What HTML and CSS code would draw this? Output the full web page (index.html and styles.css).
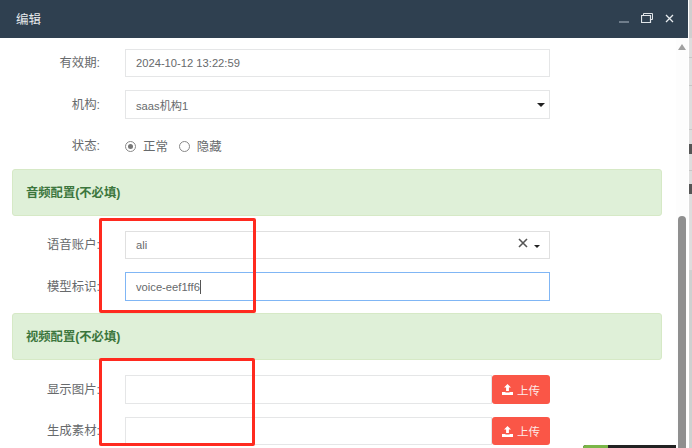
FILE: index.html
```html
<!DOCTYPE html>
<html lang="zh">
<head>
<meta charset="utf-8">
<title>编辑</title>
<link rel="stylesheet" href="styles.css">
</head>
<body>
<div class="backdrop">
  <i class="line l1"></i><i class="line l2"></i><i class="line l3"></i><i class="line l4"></i>
  <i class="tick t1"></i><i class="tick t2"></i>
</div>
<section class="modal">
  <header class="titlebar">
    <h1 class="title">编辑</h1>
    <div class="win-actions">
      <svg class="win-icon" width="10" height="10" viewBox="0 0 10 10"><path d="M0 9h10" stroke="#8b98a5" stroke-width="1.4"/></svg>
      <svg class="win-icon" width="12" height="10" viewBox="0 0 12 10" fill="none" stroke="#dfe4e8"><path d="M.5 2.5h9v7h-9z" stroke-width="1.2"/><path d="M2.5 2V.5h9v6H10" stroke-width="1"/></svg>
      <svg class="win-icon" width="9" height="9" viewBox="0 0 9 9"><path d="M1 1l7 7M8 1L1 8" stroke="#e8ecef" stroke-width="1.3"/></svg>
    </div>
  </header>
  <div class="body">
    <form class="form">
      <div class="row"><label class="lbl">有效期:</label><div class="field">2024-10-12 13:22:59</div></div>
      <div class="row row-sel"><label class="lbl">机构:</label><div class="field">saas机构1<span class="caret caret-a"></span></div></div>
      <div class="row row-radio"><label class="lbl">状态:</label>
        <div class="radios">
          <span class="radio on"></span><span class="rtext">正常</span>
          <span class="radio"></span><span class="rtext">隐藏</span>
        </div>
      </div>
      <div class="alert">音频配置(不必填)</div>
      <div class="row"><label class="lbl">语音账户:</label><div class="field field-s2">ali
        <span class="clear">
          <svg width="10" height="10" viewBox="0 0 10 10"><path d="M1 1l8 8M9 1l-8 8" stroke="#555" stroke-width="1.6"/></svg>
        </span><span class="caret caret-b"></span></div></div>
      <div class="row row-focus"><label class="lbl">模型标识:</label><div class="field focus">voice-eef1ff6<span class="cursor"></span></div></div>
      <div class="alert alert-2">视频配置(不必填)</div>
      <div class="row row-up"><label class="lbl">显示图片:</label><div class="group"><div class="field grow"></div><button type="button" class="upload"><svg width="11" height="11" viewBox="0 0 11 11"><path fill="#fff" d="M5.5 0L9 3.6H6.9V7H4.1V3.6H2zM0 8h3.4v.6h4.2V8H11v3H0z"/></svg>上传</button></div></div>
      <div class="row row-up2"><label class="lbl">生成素材:</label><div class="group"><div class="field grow"></div><button type="button" class="upload"><svg width="11" height="11" viewBox="0 0 11 11"><path fill="#fff" d="M5.5 0L9 3.6H6.9V7H4.1V3.6H2zM0 8h3.4v.6h4.2V8H11v3H0z"/></svg>上传</button></div></div>
    </form>
    <div class="scrollbar">
      <span class="arrow"></span>
      <span class="thumb"></span>
    </div>
  </div>
  <div class="mark mark-1"></div>
  <div class="mark mark-2"></div>
  <div class="badge"><span class="badge-g"></span></div>
</section>
</body>
</html>
```

FILE: styles.css
```css
* { box-sizing: border-box; }
html, body { margin: 0; height: 100%; overflow: hidden; }
body {
  font-family: "Liberation Sans", "Noto Sans CJK SC", sans-serif;
  font-size: 12px;
  color: #676a6c;
  background: #fff;
  position: relative;
}
.backdrop {
  position: absolute;
  inset: 0 0 0 688px;
  background:
    linear-gradient(90deg, #fff 0 1px, transparent 1px),
    linear-gradient(180deg, #cfcfcf 0 38px, #dddddd 38px 270px, #cdd1d0 270px);
}
.line { position: absolute; left: 1px; right: 0; height: 1px; background: #c6c6c6; }
.l1 { top: 57px; }
.l2 { top: 85px; }
.l3 { top: 129px; }
.l4 { top: 170px; }
.tick { position: absolute; left: 1px; width: 3px; height: 10px; background: #555; }
.t1 { top: 144px; }
.t2 { top: 184px; }
.modal { position: relative; width: 688px; height: 448px; background: #fff; overflow: hidden; }
.titlebar {
  height: 38px;
  background: #2f4050;
  display: flex;
  align-items: center;
  justify-content: space-between;
  padding: 0 14px 2px 16px;
}
.title { margin: 0; font-size: 12.5px; font-weight: 400; color: #e6e9ec; }
.win-actions { display: flex; align-items: center; gap: 12px; }
.body { display: flex; height: 410px; overflow: hidden; }
.form { width: 676px; padding: 11px 14px 0 12px; flex: none; }
.row { display: flex; align-items: center; height: 28px; margin-bottom: 13px; }
.row-sel { height: 29px; margin-bottom: 13px; }
.row-radio { height: 28px; margin-bottom: 9px; }
.row-focus { height: 29px; margin-bottom: 12px; }
.row-up { height: 29px; margin-bottom: 13px; }
.lbl { width: 88px; text-align: right; flex: none; font-size: 12.4px; color: #676a6c; padding-bottom: 2px; }
.field {
  width: 425px;
  height: 100%;
  margin-left: 25px;
  border: 1px solid #e5e6e7;
  padding: 0 10px;
  display: flex;
  align-items: center;
  position: relative;
  font-size: 11.2px;
  color: #676a6c;
  flex: none;
}
.field-s2 { border-color: #e0e0e0; }
.focus { border-color: #80b6f5; }
.cursor { width: 1px; height: 14px; background: #555; }
.caret { position: absolute; border-style: solid; border-color: #222 transparent transparent; }
.caret-a { right: 4px; top: 12px; border-width: 4px 4px 0; }
.caret-b { right: 9px; top: 13px; border-width: 3.5px 3.5px 0; }
.clear { position: absolute; right: 21px; top: 6px; display: flex; }
.radios { display: flex; align-items: center; margin-left: 25px; }
.radio {
  width: 11px; height: 11px; border-radius: 50%;
  border: 1px solid #888; background: #fff; position: relative; margin-right: 7px;
}
.radio.on::after {
  content: ""; position: absolute; inset: 2px; border-radius: 50%; background: #777;
}
.rtext { font-size: 12.4px; margin-right: 11px; padding-bottom: 1px; }
.alert {
  width: 650px; height: 47px;
  background: #dff0d8;
  border: 1px solid #d6e9c6;
  border-radius: 3px;
  color: #3c763d;
  font-weight: 700;
  font-size: 12.3px;
  padding: 0 13px 2px;
  display: flex; align-items: center;
  margin-bottom: 15px;
}
.alert-2 { margin-bottom: 15px; }
.group { display: flex; height: 100%; margin-left: 25px; width: 425px; }
.grow { width: 367px; margin-left: 0; }
.upload {
  width: 58px; height: 100%;
  background: #fa5647;
  border: 0;
  border-radius: 3px;
  color: #fde9e6;
  font: 11.5px "Liberation Sans", "Noto Sans CJK SC", sans-serif;
  display: flex; align-items: center; justify-content: center; gap: 4px;
  padding: 0;
}
.scrollbar { flex: none; width: 12px; background: #fdfdfd; position: relative; }
.arrow {
  position: absolute; left: 2px; top: 6px;
  border-style: solid; border-width: 0 4px 6px; border-color: transparent transparent #a0a0a0;
}
.thumb { position: absolute; left: 2px; top: 178px; width: 8px; bottom: 0; background: #8f8f8f; border-radius: 4px 4px 0 0; }
.mark { position: absolute; border: 3px solid #ff2a1f; border-radius: 2px; pointer-events: none; }
.mark-1 { left: 99px; top: 218px; width: 157px; height: 95px; }
.mark-2 { left: 99px; top: 358px; width: 156px; height: 88px; }
.badge { position: absolute; left: 583px; top: 445px; width: 93px; height: 3px; background: #222; border-radius: 3px 0 0 0; overflow: hidden; }
.badge-g { display: block; width: 25px; height: 3px; background: #7ab648; }
```
